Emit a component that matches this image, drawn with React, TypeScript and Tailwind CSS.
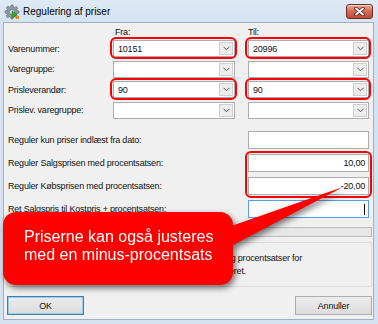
import React from "react";

const Chevron = () => (
  <svg width="7" height="5" viewBox="0 0 7 5">
    <path d="M0.5 0.8 L3.5 3.8 L6.5 0.8" fill="none" stroke="#555" strokeWidth="1" />
  </svg>
);

const Combo = ({ value = "", marked = false }: { value?: string; marked?: boolean }) => (
  <div className="relative h-[17px] bg-white border border-[#abadb3] flex items-center pl-[4px]">
    <span>{value}</span>
    <div className="ml-auto mr-[1px] h-[13px] w-[14px] border border-[#cfcfcf] bg-[#ededed] flex items-center justify-center">
      <Chevron />
    </div>
    {marked && <span className="absolute -left-[4px] -right-[3px] -top-[4px] -bottom-[3px] border-2 border-[#ff0000] rounded-[6px]" />}
  </div>
);

const TextBox = ({ value = "", focused = false }: { value?: string; focused?: boolean }) => (
  <div
    className={
      "h-[18px] w-[121px] bg-white flex items-center justify-end pr-[3px] border " +
      (focused ? "border-[#569de5]" : "border-[#abadb3]")
    }
  >
    {value}
    {focused && <span className="w-px h-[11px] bg-black" />}
  </div>
);

const GearIcon = () => (
  <svg width="16" height="16" viewBox="0 0 16 16">
    <g fill="#8d96a3" stroke="#5f6773" strokeWidth="0.6">
      <path d="M7 1h2l.4 1.8 1.4.6 1.6-1 1.4 1.4-1 1.6.6 1.4L15 7v2l-1.8.4-.6 1.4 1 1.6-1.4 1.4-1.6-1-1.4.6L9 15H7l-.4-1.8-1.4-.6-1.6 1-1.4-1.4 1-1.6-.6-1.4L1 9V7l1.8-.4.6-1.4-1-1.6 1.4-1.4 1.6 1 1.4-.6z" />
    </g>
    <circle cx="8" cy="8" r="2.6" fill="#dde3ea" stroke="#5f6773" strokeWidth="0.6" />
    <path d="M8 7l5 3.5-5 3.5z" fill="#3caa2e" stroke="#1f6e18" strokeWidth="0.5" />
    <rect x="12" y="12" width="3" height="3" fill="#f28a1c" />
  </svg>
);

const CloseButton = () => (
  <div className="ml-auto w-[27px] h-[15px] rounded-[3px] border border-[#6e2b22] bg-gradient-to-b from-[#e9ab9b] via-[#d36a58] to-[#c0473a] flex items-center justify-center shadow-[inset_0_1px_0_rgba(255,255,255,0.5)]">
    <svg width="11" height="9" viewBox="0 0 11 9">
      <path d="M2 1.5 L9 7.5 M9 1.5 L2 7.5" stroke="#4a1510" strokeWidth="3.6" strokeLinecap="round" />
      <path d="M2 1.5 L9 7.5 M9 1.5 L2 7.5" stroke="#ffffff" strokeWidth="2" strokeLinecap="round" />
    </svg>
  </div>
);

const upperRows = [
  { label: "Varenummer:", from: "10151", to: "20996", marked: true },
  { label: "Varegruppe:", from: "", to: "", marked: false },
  { label: "Prisleverandør:", from: "90", to: "90", marked: true },
  { label: "Prislev. varegruppe:", from: "", to: "", marked: false },
];

export default function App() {
  return (
    <div className="relative w-[378px] h-[324px] overflow-hidden flex flex-col bg-[#d4e2f1] font-['Liberation_Sans',Arial,sans-serif] text-[9px] leading-[10px] tracking-[-0.2px] text-[#111]">
      {/* title bar */}
      <div className="h-[22px] flex items-start pt-[4px] pl-[4px] pr-[5px] bg-gradient-to-b from-[#e0eaf6] to-[#d4e2f1]">
        <GearIcon />
        <span className="ml-[3px] mt-[3px] text-[10px] tracking-normal text-black">Regulering af priser</span>
        <CloseButton />
      </div>

      {/* client area */}
      <div className="flex-1 ml-[3px] mr-[4px] border border-[#9fb0c4] bg-[#f0f0f0] flex flex-col pl-[3px] pr-[1px]">
        <div className="w-[362px]">
          <div className="grid grid-cols-[93px_122px_121px] gap-x-[13px] h-[17px] pt-[4px]">
            <span />
            <span className="pl-[2px]">Fra:</span>
            <span>Til:</span>
          </div>
          <div className="grid grid-cols-[93px_122px_121px] gap-x-[13px] gap-y-[3.5px]">
            {upperRows.map((r) => (
              <React.Fragment key={r.label}>
                <span className="self-center pl-[1px] whitespace-nowrap">{r.label}</span>
                <Combo value={r.from} marked={r.marked} />
                <Combo value={r.to} marked={r.marked} />
              </React.Fragment>
            ))}
          </div>

          <div className="mt-[12.5px] flex flex-col gap-[5px]">
            <div className="flex items-center justify-between">
              <span className="pl-[1px]">Reguler kun priser indlæst fra dato:</span>
              <TextBox />
            </div>
            <div className="flex items-center justify-between">
              <span className="pl-[1px]">Reguler Salgsprisen med procentsatsen:</span>
              <div className="relative">
                <TextBox value="10,00" />
                <span className="absolute -left-[3px] -right-[3px] -top-[3px] h-[47px] border-2 border-[#ff0000] rounded-[6px]" />
              </div>
            </div>
            <div className="flex items-center justify-between">
              <span className="pl-[1px]">Reguler Købsprisen med procentsatsen:</span>
              <TextBox value="-20,00" />
            </div>
            <div className="flex items-center justify-between">
              <span className="pl-[1px]">Ret Salgspris til Kostpris + procentsatsen:</span>
              <TextBox focused />
            </div>
          </div>
        </div>

        <div className="mt-[9px] h-[10px] border border-[#bcbcbc] bg-[#e6e6e6]" />

        <div className="mt-[5px] h-[45px] border border-[#dcdcdc] pl-[10px] pr-[4px] pt-[9px] leading-[12.5px] whitespace-nowrap">
          <div>Bemærk: Priserne sænkes ved brug af negative beløb og procentsatser for</div>
          <div>alle varer i det valgte udvalg, som aktuelt er blevet markeret.</div>
        </div>

        <div className="mt-[9px] flex justify-between">
          <button className="w-[77px] h-[19px] border border-[#3c7fb1] bg-gradient-to-b from-[#ececec] to-[#dcdcdc] text-[9px] shadow-[inset_0_0_0_1px_#9ccbf0]">
            OK
          </button>
          <button className="w-[77px] h-[19px] border border-[#adadad] bg-gradient-to-b from-[#ececec] to-[#dcdcdc] text-[9px]">
            Annuller
          </button>
        </div>
      </div>
      <div className="h-[4px]" />

      {/* annotation callout */}
      <div className="absolute inset-0 pointer-events-none drop-shadow-[2px_3px_3px_rgba(0,0,0,0.55)]">
        <svg className="absolute inset-0" width="378" height="324" viewBox="0 0 378 324">
          <polygon points="343,187 220,230 220,252" fill="#ff0000" />
        </svg>
        <div className="absolute left-[3px] top-[212px] w-[230px] h-[73px] rounded-[13px] bg-[#ff0000] pl-[21px] pt-[16px] text-white text-[16px] leading-[18px] tracking-normal">
          <div>Priserne kan også justeres</div>
          <div>med en minus-procentsats</div>
        </div>
      </div>
    </div>
  );
}
